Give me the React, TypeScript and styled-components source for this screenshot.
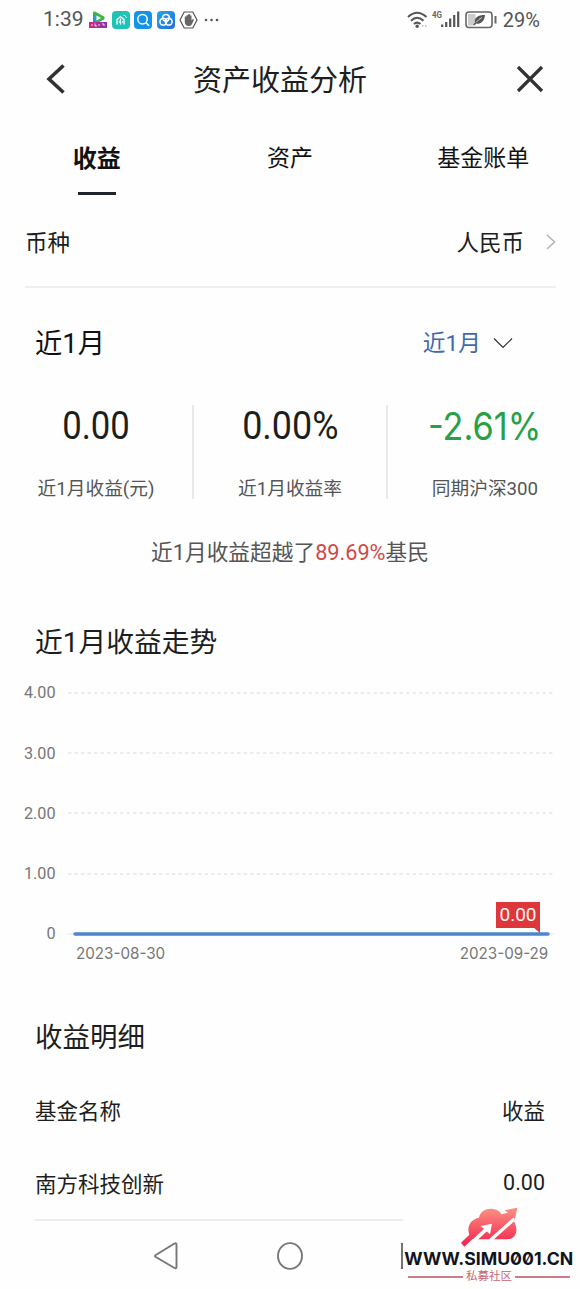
import React from "react";
import styled, { createGlobalStyle } from "styled-components";

const Global = createGlobalStyle`
  * { box-sizing: border-box; }
  body { margin: 0; background: #fefefe; }
`;

const Screen = styled.div`
  width: 580px;
  height: 1289px;
  display: flex;
  flex-direction: column;
  overflow: hidden;
  position: relative;
  background: #fefefe;
  color: #1c1e20;
  font-family: Roboto, "Noto Sans CJK SC", sans-serif;
`;

const Label = styled.span<{
  $size: number;
  $color?: string;
  $weight?: number;
  $stretch?: number;
  $origin?: string;
  $inter?: boolean;
}>`
  display: inline-block;
  white-space: nowrap;
  line-height: 1.2;
  font-size: ${(p) => p.$size}px;
  color: ${(p) => p.$color ?? "inherit"};
  font-weight: ${(p) => p.$weight ?? 400};
  transform: scaleX(${(p) => p.$stretch ?? 1});
  transform-origin: ${(p) => p.$origin ?? "center"};
  ${(p) => p.$inter && 'font-family: Inter, "Noto Sans CJK SC", sans-serif;'}
`;

const StatusBar = styled.div`
  height: 40px;
  flex: none;
  display: flex;
  justify-content: space-between;
  align-items: center;
  padding: 0 40px 0 43px;
`;
const StatusGroup = styled.div<{ $gap: number }>`
  display: flex;
  align-items: center;
  gap: ${(p) => p.$gap}px;
`;

const Header = styled.header`
  height: 80px;
  flex: none;
  display: grid;
  grid-template-columns: 60px 1fr 60px;
  align-items: center;
  padding: 0 36px 2px 46px;
`;
const HeaderTitle = styled.div`
  justify-self: center;
  padding: 5px 30px 0 0;
`;
const HeaderAction = styled.div<{ $end?: boolean }>`
  display: flex;
  justify-content: ${(p) => (p.$end ? "flex-end" : "flex-start")};
`;

const Tabs = styled.nav`
  height: 80px;
  flex: none;
  display: grid;
  grid-template-columns: repeat(3, 1fr);
`;
const Tab = styled.div<{ $active?: boolean }>`
  display: flex;
  flex-direction: column;
  align-items: center;
  padding-top: 25px;
  color: #111;
  &::after {
    content: "";
    width: 38px;
    height: 3px;
    margin-top: 18px;
    background: ${(p) => (p.$active ? "#1f262b" : "transparent")};
  }
`;

const CurrencyRow = styled.div`
  height: 88px;
  flex: none;
  margin: 0 24px 0 25px;
  display: flex;
  align-items: center;
  border-bottom: 2px solid #efefef;
`;
const Push = styled.div`
  margin-left: auto;
  display: flex;
  align-items: center;
  gap: 22px;
`;
const RaisedIcon = styled.div<{ $up?: number }>`
  display: flex;
  padding-bottom: ${(p) => p.$up ?? 3}px;
`;

const PeriodRow = styled.div`
  height: 110px;
  flex: none;
  display: flex;
  align-items: center;
  padding: 2px 66px 0 35px;
`;
const PeriodPicker = styled(Push)`
  gap: 11px;
`;

const Metrics = styled.div`
  height: 94px;
  flex: none;
  margin-top: 7px;
  display: grid;
  grid-template-columns: 194px 194px 192px;
`;
const Metric = styled.div`
  display: flex;
  flex-direction: column;
  align-items: center;
  justify-content: space-between;
  border-right: 2px solid #e9e9e9;
  &:last-child {
    border-right: 0;
    padding-left: 2px;
  }
`;
const MetricValue = styled.div`
  margin-top: -2px;
`;
const MetricLabel = styled.div`
  margin-bottom: -1px;
`;

const Summary = styled.p`
  height: 108px;
  flex: none;
  margin: 0;
  display: flex;
  align-items: center;
  justify-content: center;
`;
const Red = styled.span`
  color: #cf4a4a;
`;

const SectionTitle = styled.h2<{ $height: number; $drop: number }>`
  height: ${(p) => p.$height}px;
  flex: none;
  margin: 0;
  padding-left: 35px;
  padding-top: ${(p) => p.$drop}px;
  display: flex;
  align-items: center;
`;

const Chart = styled.section`
  flex: none;
  padding: 0 25px 0 0;
  position: relative;
`;
const GridRow = styled.div`
  height: 60.2px;
  display: flex;
  align-items: center;
  gap: 12px;
`;
const Tick = styled.div`
  width: 55.5px;
  margin-right: -0.5px;
  text-align: right;
`;
const Track = styled.div`
  flex: 1;
  height: 4px;
  display: flex;
  align-items: center;
`;
const Dates = styled.div`
  display: flex;
  justify-content: space-between;
  padding: 0 7px 0 75.5px;
  margin-top: -20px;
  height: 20px;
  align-items: center;
`;
const Bubble = styled.div`
  position: absolute;
  left: 496px;
  top: 239px;
  width: 44px;
  height: 26px;
  background: #dd373c;
  display: flex;
  align-items: center;
  justify-content: center;
  &::after {
    content: "";
    position: absolute;
    right: 0;
    top: 25px;
    border-top: 6px solid #dd373c;
    border-left: 7px solid transparent;
  }
`;

const TableRow = styled.div<{ $height: number; $line?: boolean }>`
  height: ${(p) => p.$height}px;
  flex: none;
  margin: 0 35px;
  padding-top: ${(p) => (p.$line ? 2 : 0)}px;
  display: flex;
  justify-content: space-between;
  align-items: center;
  border-bottom: ${(p) => (p.$line ? "2px solid #ededed" : "0")};
`;
const Amount = styled.div`
  padding-bottom: 5px;
`;

const NavBar = styled.div`
  height: 68px;
  padding: 3px 154px 0 153px;
  display: flex;
  justify-content: space-between;
  align-items: center;
`;

const Watermark = styled.div`
  position: absolute;
  right: 0;
  bottom: 0;
  width: 177px;
  height: 83px;
  padding: 1px 5px 0 0;
  background: #fefefe;
  display: flex;
  flex-direction: column;
  align-items: center;
`;
const SiteName = styled.div`
  font: 700 17.500px/20px Inter, sans-serif;
  font-feature-settings: "zero";
  white-space: nowrap;
  color: #11131d;
  margin-top: 2px;
  transform: scaleX(1.01);
`;
const Community = styled.div`
  display: flex;
  align-items: center;
  gap: 3px;
  margin-top: 1px;
  &::before,
  &::after {
    content: "";
    width: 55px;
    height: 1.5px;
    background: #cd7c88;
  }
`;

const AppIcons = () => (
  <svg width="132" height="20" viewBox="0 0 132 20">
    <defs>
      <linearGradient id="blue" x2="1" y2="1">
        <stop stopColor="#1aa9ee" />
        <stop offset="1" stopColor="#2b6bd8" />
      </linearGradient>
      <linearGradient id="banner">
        <stop stopColor="#d0267c" />
        <stop offset="1" stopColor="#8a35b0" />
      </linearGradient>
    </defs>
    <path d="M4 2.500Q4 1 6 1.600L15 6.500Q16.500 8 15 9.500L7 14H4Z" fill="#3cb54a" />
    <path d="M4 3v10l4-2z" fill="#1c9be0" />
    <path d="M7.500 5.500v5l4.500-2.500z" fill="#fff" />
    <rect x="0" y="12" width="18" height="6" fill="url(#banner)" />
    <path d="M3 14v2M6 13.500v2.500h2M10 14v2M13 14h2v2" stroke="#fff" strokeWidth=".8" fill="none" />
    <rect x="23" y="1" width="18" height="18" rx="4" fill="#1fc3b5" />
    <path d="M28 14.500V9.500L31.500 6.500l3.500 3v5M31.500 8.500v6M29.800 12h1.500M33 12h1" fill="none" stroke="#fff" strokeWidth="1.300" />
    <path d="M34.500 5a4 4 0 0 1 3 3" fill="none" stroke="#fff" />
    <rect x="45" y="1" width="18" height="18" rx="4" fill="#1493e8" />
    <circle cx="53.500" cy="9.200" r="4.700" fill="none" stroke="#fff" strokeWidth="1.500" />
    <path d="m57 12.800 3 3" stroke="#fff" strokeWidth="1.600" />
    <rect x="68" y="1" width="18" height="18" rx="4" fill="url(#blue)" />
    <g fill="none" stroke="#fff" strokeWidth="1.500">
      <circle cx="77" cy="7.800" r="3.400" />
      <circle cx="74.300" cy="11.700" r="3.400" />
      <circle cx="79.700" cy="11.700" r="3.400" />
    </g>
    <path d="M95.200 2h8.600l4.200 8-4.200 8h-8.600L91 10z" fill="none" stroke="#555" strokeWidth="1.200" />
    <path d="M95.800 6.500V12q.3 4 4 4 2.700 0 3.500-2.500l1.700-4-1.200-.6-1.300 1.600V5.500h-1.300V4.300H99v1h-1.500v1.200z" fill="#666" />
    <g fill="#555">
      <circle cx="117" cy="10" r="1.300" />
      <circle cx="122.500" cy="10" r="1.300" />
      <circle cx="128" cy="10" r="1.300" />
    </g>
  </svg>
);

const SignalIcons = () => (
  <svg width="90" height="22" viewBox="0 0 90 22">
    <g fill="none" stroke="#555" strokeWidth="2">
      <path d="M1 8q9-8.500 18.500 0" />
      <path d="M4 11.700q6-6 12.500 0" />
      <path d="M7 15q3-2.800 6.500 0" />
    </g>
    <circle cx="10.200" cy="17.300" r="1.700" fill="#555" />
    <path d="M15 17h1.500M18 17h1.500" stroke="#ccc" strokeWidth="2" />
    <text x="25" y="9" fontSize="9.500" fontWeight="700" fontFamily="Roboto" fill="#666" textLength="10" lengthAdjust="spacingAndGlyphs">4G</text>
    <path d="M35.200 18v-2.500M39.200 18v-5M43.200 18V9.500M47.200 18V6M51.200 18V2.500" stroke="#555" strokeWidth="2.200" />
    <rect x="59" y="3" width="26" height="15.500" rx="3" fill="none" stroke="#666" strokeWidth="1.600" />
    <rect x="61" y="5" width="7.500" height="11.500" fill="#ccc" />
    <path d="M66 16l2-2.500c-1-5 3-7.500 10-7.500-.5 6-4 9.500-8.500 8.500L67.500 16z" fill="#555" />
    <path d="M69 13.500q3-3.500 6-5" stroke="#eee" strokeWidth=".8" fill="none" />
    <path d="M88.500 7v7.500" stroke="#666" strokeWidth="2" />
  </svg>
);

const BackIcon = () => (
  <svg width="22" height="32" viewBox="0 0 22 32" fill="none" stroke="#303234" strokeWidth="3.600">
    <path d="M17.500 2.500 3 16l14.500 13.500" />
  </svg>
);
const CloseIcon = () => (
  <svg width="28" height="28" viewBox="0 0 28 28" fill="none" stroke="#303234" strokeWidth="3.200">
    <path d="M2 2l24 24M26 2 2 26" />
  </svg>
);
const ChevronRight = () => (
  <svg width="10" height="18" viewBox="0 0 10 18" fill="none" stroke="#b5b5b5" strokeWidth="1.600">
    <path d="M1 2l7.500 7L1 16" />
  </svg>
);
const ChevronDown = () => (
  <svg width="22" height="14" viewBox="0 0 22 14" fill="none" stroke="#333" strokeWidth="1.200">
    <path d="M2 2.500l9 9 9-9" />
  </svg>
);
const Dashes = () => (
  <svg width="488" height="2">
    <path d="M1 1H487" stroke="#e6e6e6" strokeWidth="1.500" strokeDasharray="3.500 3" />
  </svg>
);
const ZeroLine = () => (
  <svg width="488" height="4">
    <path d="M0 2H487" stroke="#e8e8e8" />
    <path d="M8 2H481" stroke="#4c86cc" strokeWidth="3.400" strokeLinecap="round" />
  </svg>
);
const NavTriangle = () => (
  <svg width="26" height="30" viewBox="0 0 26 30" fill="none" stroke="#777" strokeWidth="1.900" strokeLinejoin="round">
    <path d="M2.800 14 21.500 2.500Q23.500 1.500 23.500 4V25.500Q23.500 28 21.500 27L2.800 16Q1 15 2.800 14Z" />
  </svg>
);
const NavCircle = () => (
  <svg width="26" height="30" viewBox="1 0 26 30" fill="none" stroke="#777" strokeWidth="1.900">
    <ellipse cx="14" cy="15" rx="12" ry="12.900" />
  </svg>
);
const NavSquare = () => (
  <svg width="25" height="26" viewBox="0 0 25 26" fill="none" stroke="#666" strokeWidth="1.800">
    <path d="M1 1h23v24H1z" />
  </svg>
);
const CloudLogo = () => (
  <svg width="58" height="40" viewBox="15 12 174 120">
    <defs>
      <linearGradient id="cloud" gradientUnits="userSpaceOnUse" x1="0" y1="12" x2="0" y2="125">
        <stop stopColor="#fb9384" />
        <stop offset="1" stopColor="#f5264f" />
      </linearGradient>
    </defs>
    <path
      d="M18 119 43 95C34 70 48 48 72 44 78 14 122 8 140 34L159 29 148 22 187 14 179 52 174 50C191 74 188 108 155 109H52L28 131Z"
      fill="url(#cloud)"
    />
    <path d="M38 131 96 77" stroke="#fefefe" strokeWidth="11" />
    <path d="M77 69 111 62 105 94Z" fill="#fefefe" />
    <path d="M100 117 179 47" stroke="#fefefe" strokeWidth="10" />
  </svg>
);

const metrics = [
  { value: "0.00", label: "近1月收益(元)", color: "#1c1e20", stretch: 0.89 },
  { value: "0.00%", label: "近1月收益率", color: "#1c1e20", stretch: 0.92 },
  { value: "-2.61%", label: "同期沪深300", color: "#27a047", stretch: 0.89, inter: true },
];

export default function App() {
  return (
    <>
      <Global />
      <Screen>
        <StatusBar>
          <StatusGroup $gap={5}>
            <Label $size={21} $color="#555">1:39</Label>
            <AppIcons />
          </StatusGroup>
          <StatusGroup $gap={6}>
            <SignalIcons />
            <Label $size={20} $color="#555">29%</Label>
          </StatusGroup>
        </StatusBar>
        <Header>
          <HeaderAction><BackIcon /></HeaderAction>
          <HeaderTitle><Label $size={29}>资产收益分析</Label></HeaderTitle>
          <HeaderAction $end><CloseIcon /></HeaderAction>
        </Header>
        <Tabs>
          <Tab $active><Label $size={24} $weight={700}>收益</Label></Tab>
          <Tab><Label $size={23}>资产</Label></Tab>
          <Tab><Label $size={23}>基金账单</Label></Tab>
        </Tabs>
        <CurrencyRow>
          <Label $size={22.5}>币种</Label>
          <Push>
            <Label $size={22.5}>人民币</Label>
            <RaisedIcon><ChevronRight /></RaisedIcon>
          </Push>
        </CurrencyRow>
        <PeriodRow>
          <Label $size={27.3} $color="#111">近1月</Label>
          <PeriodPicker>
            <Label $size={22.7} $color="#4269ad">近1月</Label>
            <RaisedIcon $up={1}><ChevronDown /></RaisedIcon>
          </PeriodPicker>
        </PeriodRow>
        <Metrics>
          {metrics.map((m) => (
            <Metric key={m.label}>
              <MetricValue>
                <Label $size={m.inter ? 38.5 : 39} $color={m.color} $stretch={m.stretch} $inter={m.inter}>{m.value}</Label>
              </MetricValue>
              <MetricLabel>
                <Label $size={18.7} $color="#555">{m.label}</Label>
              </MetricLabel>
            </Metric>
          ))}
        </Metrics>
        <Summary>
          <Label $size={21.7} $color="#555">近1月收益超越了<Red>89.69%</Red>基民</Label>
        </Summary>
        <SectionTitle $height={56} $drop={15}><Label $size={27.8}>近1月收益走势</Label></SectionTitle>
        <Chart>
          {["4.00", "3.00", "2.00", "1.00", "0"].map((t) => (
            <GridRow key={t}>
              <Tick><Label $size={16.2} $color="#777">{t}</Label></Tick>
              <Track>{t === "0" ? <ZeroLine /> : <Dashes />}</Track>
            </GridRow>
          ))}
          <Dates>
            <Label $size={16.5} $color="#777" $inter $stretch={0.92} $origin="left">2023-08-30</Label>
            <Label $size={16.5} $color="#777" $inter $stretch={0.92} $origin="right">2023-09-29</Label>
          </Dates>
          <Bubble><Label $size={19} $color="#fff5ee">0.00</Label></Bubble>
        </Chart>
        <SectionTitle $height={110} $drop={38}><Label $size={27.5}>收益明细</Label></SectionTitle>
        <TableRow $height={75}>
          <Label $size={21.5}>基金名称</Label>
          <Label $size={21.5}>收益</Label>
        </TableRow>
        <TableRow $height={72} $line>
          <Label $size={21.5}>南方科技创新</Label>
          <Amount><Label $size={21.5}>0.00</Label></Amount>
        </TableRow>
        <NavBar>
          <NavTriangle />
          <NavCircle />
          <NavSquare />
        </NavBar>
        <Watermark>
          <CloudLogo />
          <SiteName>WWW.SIMU001.CN</SiteName>
          <Community><Label $size={11.5} $color="#c76474">私募社区</Label></Community>
        </Watermark>
      </Screen>
    </>
  );
}
